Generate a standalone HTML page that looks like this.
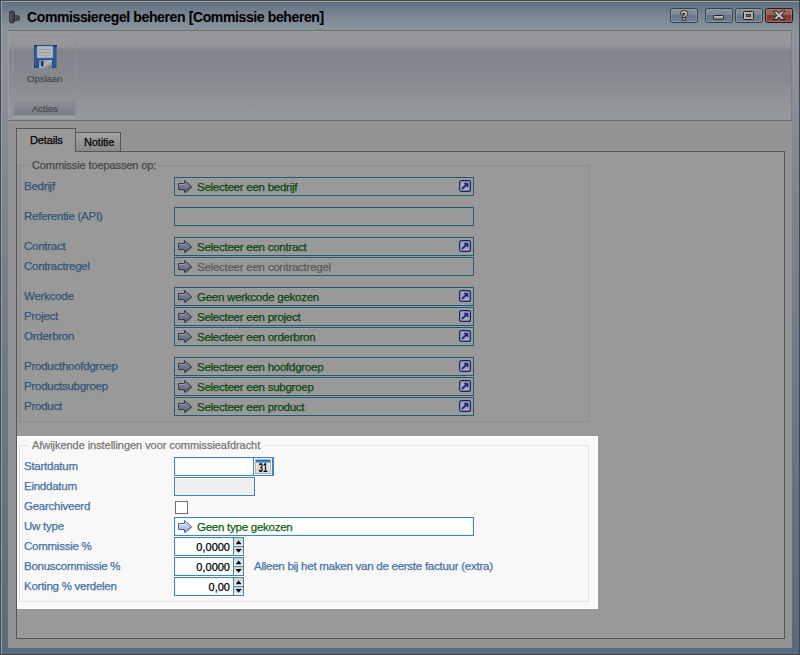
<!DOCTYPE html>
<html><head><meta charset="utf-8">
<style>
*{margin:0;padding:0;box-sizing:border-box}
html,body{width:800px;height:655px;overflow:hidden;background:#4a4c50}
body{position:relative;font-family:"Liberation Sans",sans-serif;font-size:11px;-webkit-text-stroke:0.25px currentColor}
.a{position:absolute}
#win{left:0;top:0;width:800px;height:655px;border:1px solid #46494c;background:linear-gradient(#5e6d7e 0px,#7b8793 15px,#8b949d 30px,#8a939c 60px,#7a8590 200px,#66778a 420px,#5b6b7d 640px)}
#winl{left:1px;top:1px;width:798px;height:653px;border-top:1px solid #9aa2aa;border-left:1px solid #9aa0a6}
#ttext{left:27px;top:8.5px;font-weight:bold;font-size:14px;color:#000;-webkit-text-stroke:0.1px #000;letter-spacing:-0.38px;line-height:16px;white-space:nowrap}
#panel{left:8px;top:30px;width:784px;height:618px;background:#939393}
#ribbon{left:8px;top:30px;width:784px;height:91px;border-top:1px solid #6f7276;border-left:1px solid #9a9ea2;border-right:1px solid #7c7f83;border-bottom:1px solid #6c6e70;background:linear-gradient(#98999b 0,#96979a 15px,#81848b 20px,#868a90 50%,#979a9d 100%)}
#grp{left:12px;top:36px;width:65px;height:82px;border:1px solid #8e9092;border-bottom-color:#a2a4a6;border-radius:2px}
#acties{left:14px;top:101px;width:61px;height:14px;background:linear-gradient(#8c9097,#7a7e86)}
.gt{font-size:9.5px;color:#4c4c4c;white-space:nowrap;line-height:12px}
#tabpage{left:16px;top:151px;width:769px;height:488px;border:1px solid #555;background:#999}
#tab1{left:16px;top:128px;width:60px;height:24px;border:1px solid #555;border-bottom:none;background:#999}
#tab2{left:75px;top:132px;width:46px;height:20px;border:1px solid #555;background:linear-gradient(#a2a2a2,#8a8a8a)}
.tabt{font-size:11px;letter-spacing:-0.15px;color:#000;line-height:14px;white-space:nowrap}
.gb{border:1px solid #8c8c8c}
.gbt{font-size:11px;letter-spacing:-0.05px;color:#474747;line-height:14px;white-space:nowrap;padding:0 3px}
.lbl{left:24px;font-size:11.5px;letter-spacing:-0.25px;color:#315477;line-height:19px;white-space:nowrap}
.box{left:174px;width:300px;height:19px;border:1px solid #2d5569;box-shadow:inset 0 0 0 1px #8fa3ab;background:#999}
.btx{font-size:11.5px;letter-spacing:-0.25px;color:#0c450c;line-height:19px;white-space:nowrap}
.btx.dis{color:#5a5a5a}
/* highlight */
#hl{left:17px;top:436px;width:581px;height:173px;background:#f8f8f8;border:1px solid #fff}
.hlbl{left:24px;font-size:11.5px;letter-spacing:-0.25px;color:#4672a2;line-height:19px;white-space:nowrap}
.hbox{left:174px;height:19px;border:1px solid #4a84a8;box-shadow:inset 0 0 0 1px #e0f8fc;background:#fff}
.num{font-size:11px;color:#000;line-height:19px;text-align:right;white-space:nowrap}
</style></head><body>
<svg width="0" height="0" style="position:absolute">
<defs>
<linearGradient id="ga" x1="0" y1="0" x2="0" y2="1"><stop offset="0" stop-color="#dde6fb"/><stop offset="1" stop-color="#9fb0d6"/></linearGradient>
<linearGradient id="gaD" x1="0" y1="0" x2="0" y2="1"><stop offset="0" stop-color="#858a96"/><stop offset="1" stop-color="#5f6a80"/></linearGradient>
<linearGradient id="gsh" x1="0" y1="0" x2="1" y2="1"><stop offset="0" stop-color="#7e8286"/><stop offset="0.5" stop-color="#b4b6b8"/><stop offset="1" stop-color="#686c72"/></linearGradient>
<g id="arr"><path d="M1.5 4.5H7.5V1.5L14.3 7.4L7.5 13.3V10.3H1.5Z" fill="#606a80" opacity="0.5"/><path d="M0.5 3.5H6.5V0.5L13.5 6.6L6.5 12.5V9.5H0.5Z" fill="url(#ga)" stroke="#56668a" stroke-width="1"/><path d="M1.5 4.5H7" stroke="#eef4ff" stroke-width="0.8"/></g>
<g id="arrD"><path d="M1.5 4.5H7.5V1.5L14.3 7.4L7.5 13.3V10.3H1.5Z" fill="#3a3e46" opacity="0.55"/><path d="M0.5 3.5H6.5V0.5L13.5 6.6L6.5 12.5V9.5H0.5Z" fill="url(#gaD)" stroke="#333b4e" stroke-width="1"/><path d="M1.5 4.5H7" stroke="#9aa2b2" stroke-width="0.8"/></g>
<g id="lnkD"><rect x="0.6" y="0.6" width="10.8" height="10.8" rx="2" fill="#a2a8c4" stroke="#1a2358" stroke-width="1.2"/><path d="M3 9L7.5 4.5" stroke="#1b2a78" stroke-width="1.8"/><path d="M5 3.2H9V7.2Z" fill="#1b2a78" stroke="#1b2a78" stroke-width="0.8"/></g>
</defs></svg>
<div class="a" id="win"></div>
<div class="a" id="winl"></div>
<svg class="a" style="left:8px;top:10px" width="13" height="14"><path d="M1.5 2.5Q1.5 1 4 1Q6.5 1 6.5 2.5V11.5Q6.5 13 4 13Q1.5 13 1.5 11.5Z" fill="#3e3f42" stroke="#2a2b2d" stroke-width="0.8"/><path d="M6.5 5.5H9Q11.5 5.5 11.5 7.5V9Q11.5 10.5 9 10.5H6.5Z" fill="#4a4b4e" stroke="#2a2b2d" stroke-width="0.8"/><path d="M2.8 3V11" stroke="#66686c" stroke-width="1"/></svg>
<div class="a" id="ttext">Commissieregel beheren [Commissie beheren]</div>
<svg class="a" style="left:670px;top:8px" width="123" height="15">
<defs>
<linearGradient id="tbg" x1="0" y1="0" x2="0" y2="1"><stop offset="0" stop-color="#8793a0"/><stop offset="0.45" stop-color="#7c8894"/><stop offset="0.5" stop-color="#65778a"/><stop offset="1" stop-color="#6d7f91"/></linearGradient>
<linearGradient id="tbr" x1="0" y1="0" x2="0" y2="1"><stop offset="0" stop-color="#9c6a62"/><stop offset="0.45" stop-color="#966258"/><stop offset="0.5" stop-color="#7a3a2c"/><stop offset="1" stop-color="#864c40"/></linearGradient>
</defs>
<rect x="0.5" y="0.5" width="27" height="14" rx="2" fill="url(#tbg)" stroke="#38414b"/>
<rect x="1.5" y="1.5" width="25" height="12" rx="1" fill="none" stroke="#98a2ac" stroke-opacity="0.6"/>
<text x="14" y="12" font-family="Liberation Sans" font-weight="bold" font-size="12.5" text-anchor="middle" fill="#c4c4c4" stroke="#1e1e1e" stroke-width="1.6" paint-order="stroke" style="-webkit-text-stroke:0">?</text>
<rect x="35.5" y="0.5" width="27" height="14" rx="2" fill="url(#tbg)" stroke="#38414b"/>
<rect x="36.5" y="1.5" width="25" height="12" rx="1" fill="none" stroke="#98a2ac" stroke-opacity="0.6"/>
<rect x="43.5" y="7.5" width="10" height="3.5" rx="1" fill="#b4b4b4" stroke="#222"/>
<rect x="65.5" y="0.5" width="27" height="14" rx="2" fill="url(#tbg)" stroke="#38414b"/>
<rect x="66.5" y="1.5" width="25" height="12" rx="1" fill="none" stroke="#98a2ac" stroke-opacity="0.6"/>
<rect x="73.5" y="3.5" width="10" height="8" rx="1" fill="#b4b4b4" stroke="#222"/><rect x="76.5" y="6.5" width="4" height="2" fill="#5a6672" stroke="#222" stroke-width="0.8"/>
<rect x="95.5" y="0.5" width="27" height="14" rx="2" fill="url(#tbr)" stroke="#2a1414"/>
<rect x="96.5" y="1.5" width="25" height="12" rx="1" fill="none" stroke="#c08a80" stroke-opacity="0.5"/>
<path d="M103 3H107L109 5.4L111 3H115L111.2 7.3L115 11.6H111L109 9.2L107 11.6H103L106.8 7.3Z" fill="#bdbdbd" stroke="#1e1e1e" stroke-width="1"/>
</svg>
<div class="a" id="panel"></div>
<div class="a" id="ribbon"></div>
<div class="a" id="grp"></div>
<div class="a" id="acties"></div>
<svg class="a" style="left:33px;top:44px" width="25" height="25">
<path d="M1 1.5Q1 1 1.5 1H23.5V23.5Q23.5 24 23 24H2Q1 24 1 23Z" fill="#27518e"/>
<rect x="1" y="1" width="3" height="23" fill="#244a84"/>
<rect x="2" y="3" width="1.5" height="19" fill="#325f9c"/>
<rect x="21" y="3" width="1.5" height="19" fill="#325f9c"/>
<rect x="1" y="1" width="23" height="2" fill="#1b3564"/>
<rect x="4" y="2" width="16" height="12" fill="#b4b8bc"/>
<rect x="4" y="2" width="16" height="12" fill="none" stroke="#6e86aa" stroke-width="0.6"/>
<rect x="6" y="5" width="12" height="0.8" fill="#8e9398"/>
<rect x="6" y="8" width="12" height="0.8" fill="#8e9398"/>
<rect x="6" y="11" width="12" height="0.8" fill="#9aa0a6"/>
<rect x="6" y="16" width="13" height="8" fill="url(#gsh)"/>
<rect x="8" y="17" width="2.5" height="5.5" fill="#1a3f78"/>
</svg>
<div class="a gt" style="left:27px;top:73px">Opslaan</div>
<div class="a gt" style="left:32px;top:103px">Acties</div>

<div class="a" id="tabpage"></div>
<div class="a" id="tab2"></div>
<div class="a" id="tab1"></div>
<div class="a tabt" style="left:30px;top:133px">Details</div>
<div class="a tabt" style="left:84px;top:135px">Notitie</div>

<div class="a gb" style="left:19px;top:165px;width:570px;height:257px"></div>
<div class="a gbt" style="left:29px;top:158px;background:#999;letter-spacing:-0.1px">Commissie toepassen op:</div>
<div class="a lbl" style="top:177px">Bedrijf</div>
<div class="a box" style="top:177px"></div>
<svg class="a arr" style="left:178px;top:180px" width="15" height="14"><use href="#arrD"/></svg>
<div class="a btx" style="left:197px;top:178px">Selecteer een bedrijf</div>
<svg class="a" style="left:459px;top:180px" width="12" height="12"><use href="#lnkD"/></svg>
<div class="a lbl" style="top:207px">Referentie (API)</div>
<div class="a box" style="top:207px"></div>
<div class="a lbl" style="top:237px">Contract</div>
<div class="a box" style="top:237px"></div>
<svg class="a arr" style="left:178px;top:240px" width="15" height="14"><use href="#arrD"/></svg>
<div class="a btx" style="left:197px;top:238px">Selecteer een contract</div>
<svg class="a" style="left:459px;top:240px" width="12" height="12"><use href="#lnkD"/></svg>
<div class="a lbl" style="top:257px">Contractregel</div>
<div class="a box" style="top:257px"></div>
<svg class="a arr" style="left:178px;top:260px" width="15" height="14"><use href="#arrD"/></svg>
<div class="a btx dis" style="left:197px;top:258px">Selecteer een contractregel</div>
<div class="a lbl" style="top:287px">Werkcode</div>
<div class="a box" style="top:287px"></div>
<svg class="a arr" style="left:178px;top:290px" width="15" height="14"><use href="#arrD"/></svg>
<div class="a btx" style="left:197px;top:288px">Geen werkcode gekozen</div>
<svg class="a" style="left:459px;top:290px" width="12" height="12"><use href="#lnkD"/></svg>
<div class="a lbl" style="top:307px">Project</div>
<div class="a box" style="top:307px"></div>
<svg class="a arr" style="left:178px;top:310px" width="15" height="14"><use href="#arrD"/></svg>
<div class="a btx" style="left:197px;top:308px">Selecteer een project</div>
<svg class="a" style="left:459px;top:310px" width="12" height="12"><use href="#lnkD"/></svg>
<div class="a lbl" style="top:327px">Orderbron</div>
<div class="a box" style="top:327px"></div>
<svg class="a arr" style="left:178px;top:330px" width="15" height="14"><use href="#arrD"/></svg>
<div class="a btx" style="left:197px;top:328px">Selecteer een orderbron</div>
<svg class="a" style="left:459px;top:330px" width="12" height="12"><use href="#lnkD"/></svg>
<div class="a lbl" style="top:357px">Producthoofdgroep</div>
<div class="a box" style="top:357px"></div>
<svg class="a arr" style="left:178px;top:360px" width="15" height="14"><use href="#arrD"/></svg>
<div class="a btx" style="left:197px;top:358px">Selecteer een hoofdgroep</div>
<svg class="a" style="left:459px;top:360px" width="12" height="12"><use href="#lnkD"/></svg>
<div class="a lbl" style="top:377px">Productsubgroep</div>
<div class="a box" style="top:377px"></div>
<svg class="a arr" style="left:178px;top:380px" width="15" height="14"><use href="#arrD"/></svg>
<div class="a btx" style="left:197px;top:378px">Selecteer een subgroep</div>
<svg class="a" style="left:459px;top:380px" width="12" height="12"><use href="#lnkD"/></svg>
<div class="a lbl" style="top:397px">Product</div>
<div class="a box" style="top:397px"></div>
<svg class="a arr" style="left:178px;top:400px" width="15" height="14"><use href="#arrD"/></svg>
<div class="a btx" style="left:197px;top:398px">Selecteer een product</div>
<svg class="a" style="left:459px;top:400px" width="12" height="12"><use href="#lnkD"/></svg><div class="a" id="hl"></div>
<div class="a" style="left:19px;top:445px;width:570px;height:157px;border:1px solid #e4e4e4"></div>
<div class="a gbt" style="left:29px;top:438px;background:#f8f8f8;color:#767676">Afwijkende instellingen voor commissieafdracht</div>
<div class="a hlbl" style="top:457px">Startdatum</div>
<div class="a hbox" style="top:457px;width:100px"></div>
<div class="a hbox" style="top:457px;left:253px;width:20px;background:#f4fbfd"></div>
<svg class="a" style="left:255px;top:459px" width="16" height="15">
<defs><linearGradient id="gcal" x1="0" y1="0" x2="0" y2="1"><stop offset="0" stop-color="#f4f4f4"/><stop offset="1" stop-color="#d8d8d8"/></linearGradient></defs>
<rect x="0.5" y="0.5" width="15" height="14" fill="url(#gcal)" stroke="#b4b4b4"/>
<rect x="1" y="1" width="14" height="2.5" fill="#2f7ab8"/>
<text x="8" y="13.2" font-family="Liberation Sans" font-weight="bold" font-size="12.5" text-anchor="middle" fill="#000" textLength="9" lengthAdjust="spacingAndGlyphs" style="-webkit-text-stroke:0.2px #000">31</text>
</svg>
<div class="a hlbl" style="top:477px">Einddatum</div>
<div class="a hbox" style="top:477px;width:81px;background:#efefef"></div>
<div class="a hlbl" style="top:497px">Gearchiveerd</div>
<div class="a" style="left:175px;top:501px;width:13px;height:13px;border:1px solid #707070;background:#fff"></div>
<div class="a hlbl" style="top:517px">Uw type</div>
<div class="a hbox" style="top:517px;width:300px"></div>
<svg class="a" style="left:178px;top:520px" width="15" height="14"><use href="#arr"/></svg>
<div class="a btx" style="left:197px;top:518px;color:#136013">Geen type gekozen</div>
<div class="a hlbl" style="top:537px">Commissie %</div>
<div class="a hlbl" style="top:557px">Bonuscommissie %</div>
<div class="a hlbl" style="left:254px;top:557px">Alleen bij het maken van de eerste factuur (extra)</div>
<div class="a hlbl" style="top:577px">Korting % verdelen</div>
<div class="a hbox" style="top:537px;width:70px"></div>
<div class="a num" style="left:176px;top:538px;width:54px">0,0000</div>
<svg class="a" style="left:233px;top:537px" width="11" height="19">
<defs><linearGradient id="gsp537" x1="0" y1="0" x2="0" y2="1"><stop offset="0" stop-color="#cfcfcf"/><stop offset="1" stop-color="#eef8fb"/></linearGradient></defs>
<rect x="1" y="1" width="9" height="8" fill="url(#gsp537)"/><rect x="1" y="10" width="9" height="8" fill="url(#gsp537)"/>
<path d="M0.5 0V19M0 9.5H11" stroke="#4a84a8"/>
<path d="M2.6 7.2H8.6L5.6 3.4Z" fill="#000"/><path d="M2.6 12H8.6L5.6 15.8Z" fill="#000"/></svg>
<div class="a hbox" style="top:557px;width:70px"></div>
<div class="a num" style="left:176px;top:558px;width:54px">0,0000</div>
<svg class="a" style="left:233px;top:557px" width="11" height="19">
<defs><linearGradient id="gsp557" x1="0" y1="0" x2="0" y2="1"><stop offset="0" stop-color="#cfcfcf"/><stop offset="1" stop-color="#eef8fb"/></linearGradient></defs>
<rect x="1" y="1" width="9" height="8" fill="url(#gsp557)"/><rect x="1" y="10" width="9" height="8" fill="url(#gsp557)"/>
<path d="M0.5 0V19M0 9.5H11" stroke="#4a84a8"/>
<path d="M2.6 7.2H8.6L5.6 3.4Z" fill="#000"/><path d="M2.6 12H8.6L5.6 15.8Z" fill="#000"/></svg>
<div class="a hbox" style="top:577px;width:70px"></div>
<div class="a num" style="left:176px;top:578px;width:54px">0,00</div>
<svg class="a" style="left:233px;top:577px" width="11" height="19">
<defs><linearGradient id="gsp577" x1="0" y1="0" x2="0" y2="1"><stop offset="0" stop-color="#cfcfcf"/><stop offset="1" stop-color="#eef8fb"/></linearGradient></defs>
<rect x="1" y="1" width="9" height="8" fill="url(#gsp577)"/><rect x="1" y="10" width="9" height="8" fill="url(#gsp577)"/>
<path d="M0.5 0V19M0 9.5H11" stroke="#4a84a8"/>
<path d="M2.6 7.2H8.6L5.6 3.4Z" fill="#000"/><path d="M2.6 12H8.6L5.6 15.8Z" fill="#000"/></svg></body></html>
